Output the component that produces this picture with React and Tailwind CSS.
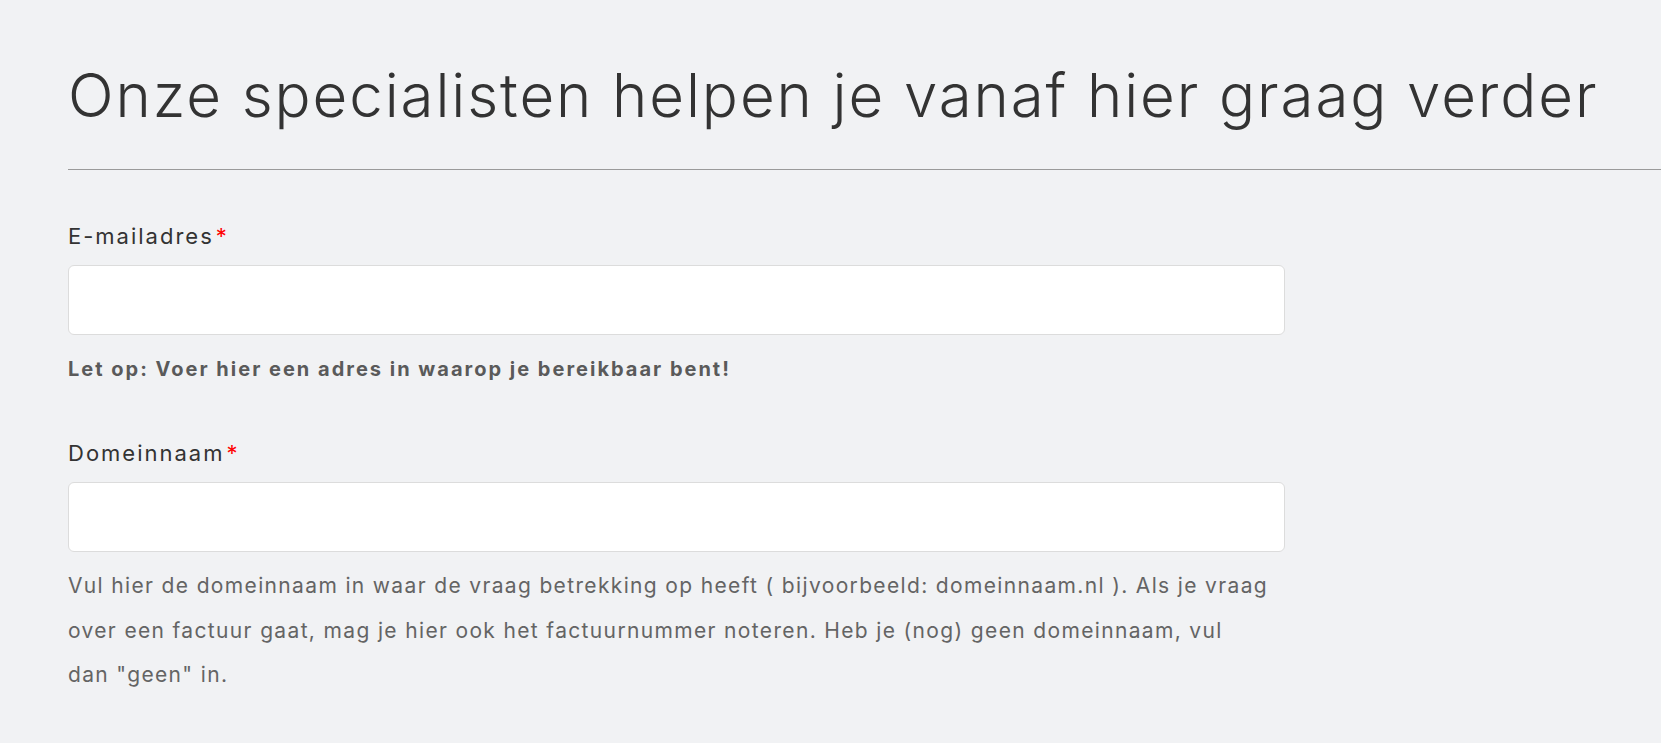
export default function App() {
  return (
    <div
      className="min-h-[743px] w-full bg-[#f1f2f4] pl-[68px]"
      style={{ fontFamily: "Inter, 'Noto Sans', sans-serif" }}
    >
      <h1 className="pt-[65px] text-[60px] font-light leading-[60px] tracking-[1.9px] text-[#333333]">
        Onze specialisten helpen je vanaf hier graag verder
      </h1>
      <hr className="mt-[44px] border-0 border-t border-[#9a9a9a]" />

      <form className="w-[1217px]">
        <label className="mt-[52px] block text-[22px] leading-[28px] tracking-[2px] text-[#333333]">
          E-mailadres<span className="ml-[2px] text-[#ff0000]">*</span>
        </label>
        <input
          type="email"
          className="mt-[15px] block h-[70px] w-full rounded-[6px] border border-[#dcdcdc] bg-white px-4 outline-none"
        />
        <p className="mt-[20px] text-[20px] font-bold leading-[28px] tracking-[2px] text-[#5a5a5a]">
          Let op: Voer hier een adres in waarop je bereikbaar bent!
        </p>

        <label className="mt-[56px] block text-[22px] leading-[28px] tracking-[2px] text-[#333333]">
          Domeinnaam<span className="ml-[2px] text-[#ff0000]">*</span>
        </label>
        <input
          type="text"
          className="mt-[15px] block h-[70px] w-full rounded-[6px] border border-[#dcdcdc] bg-white px-4 outline-none"
        />
        <p className="mt-[12px] text-[21px] leading-[44.5px] tracking-[1.35px] text-[#646464]">
          Vul hier de domeinnaam in waar de vraag betrekking op heeft ( bijvoorbeeld: domeinnaam.nl ). Als je vraag over een factuur gaat, mag je hier ook het factuurnummer noteren. Heb je (nog) geen domeinnaam, vul
          <br />
          dan "geen" in.
        </p>
      </form>
    </div>
  );
}
